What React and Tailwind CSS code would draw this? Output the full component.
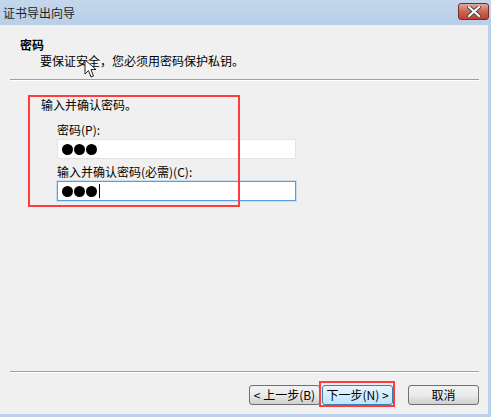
const font = { fontFamily: '"Noto Sans CJK SC", "Liberation Sans", sans-serif' };

function Dots({ caret }) {
  return (
    <div className="flex items-center gap-[1px] pl-[4px] h-full">
      <span className="w-[11px] h-[11px] rounded-full bg-black" />
      <span className="w-[11px] h-[11px] rounded-full bg-black" />
      <span className="w-[11px] h-[11px] rounded-full bg-black" />
      {caret && <span className="ml-[1px] w-[1px] h-[14px] bg-black" />}
    </div>
  );
}

function WinButton({ children, active }) {
  return (
    <div
      className={
        "w-[71px] h-[20px] rounded-[3px] border flex items-center justify-center text-[12px] text-black " +
        (active
          ? "border-[#3c7fb1] bg-gradient-to-b from-[#eaf6fd] to-[#bee6fd]"
          : "border-[#707070] bg-gradient-to-b from-[#f2f2f2] via-[#ebebeb] to-[#cfcfcf]")
      }
    >
      {children}
    </div>
  );
}

export default function App() {
  return (
    <div
      className="w-[491px] h-[417px] bg-[#b9d1ea] flex flex-col overflow-hidden relative"
      style={font}
    >
      {/* title bar */}
      <div className="h-[25px] flex items-center justify-between pl-[3px] pr-[2px] bg-gradient-to-b from-[#c3d7ec] to-[#b8cfe8]">
        <span className="text-[12px] text-[#1e1e1e]">证书导出向导</span>
        <div className="w-[31px] h-[17px] mb-[2px] rounded-[3px] border border-[#6e2e28] bg-gradient-to-b from-[#e5a79c] via-[#d06452] to-[#c23d2a] flex items-center justify-center">
          <svg width="14" height="11" viewBox="0 0 14 11">
            <path
              d="M2 1 L12 10 M12 1 L2 10"
              stroke="#4a4a4a"
              strokeWidth="4"
              strokeLinecap="square"
            />
            <path
              d="M2 1 L12 10 M12 1 L2 10"
              stroke="#ffffff"
              strokeWidth="2"
              strokeLinecap="square"
            />
          </svg>
        </div>
      </div>

      {/* body */}
      <div className="flex-1 mr-[3px] mb-[3px] bg-[#f0f0f0] flex flex-col relative">
        <div className="pt-[12px] pl-[20px]">
          <div className="text-[12px] leading-[16px] font-bold text-black">密码</div>
          <div className="text-[12px] leading-[16px] pl-[20px] text-black">
            要保证安全，您必须用密码保护私钥。
          </div>
        </div>
        <div className="mt-[10px] ml-[10px] mr-[9px] h-[2px] border-t border-[#a0a0a0] border-b border-b-white" />

        <div className="pl-[41px] pt-[16px] text-[12px] leading-[16px] text-black">
          <div>输入并确认密码。</div>
          <div className="pl-[16px] pt-[9px]">
            <div>密码(P):</div>
            <div className="mt-[1px] w-[239px] h-[20px] bg-white border border-[#e3e3e3]">
              <Dots />
            </div>
            <div className="mt-[5px]">输入并确认密码(必需)(C):</div>
            <div className="mt-[1px] w-[239px] h-[20px] bg-white border border-[#569de5] shadow-[0_0_0_1px_#c7ddf2]">
              <Dots caret />
            </div>
          </div>
        </div>

        <div className="flex-1" />

        <div className="ml-[10px] mr-[9px] h-[2px] border-t border-[#a0a0a0] border-b border-b-white" />
        <div className="flex items-center pl-[249px] pt-[11px] pb-[9px] h-[41px]">
          <WinButton>&lt; 上一步(B)</WinButton>
          <div className="ml-[2px]">
            <WinButton active>下一步(N) &gt;</WinButton>
          </div>
          <div className="ml-[15px]">
            <WinButton>取消</WinButton>
          </div>
        </div>

        {/* red annotation boxes */}
        <div className="absolute left-[28px] top-[70px] w-[212px] h-[112px] border-2 border-[#ff3b3b] pointer-events-none" />
        <div className="absolute left-[319px] top-[356px] w-[76px] h-[26px] border-2 border-[#ff3b3b] pointer-events-none" />

        {/* mouse cursor */}
        <svg
          className="absolute left-[84px] top-[34px]"
          width="14"
          height="20"
          viewBox="0 0 14 20"
        >
          <path
            d="M1 1 L1 15 L4.5 11.5 L7 18 L9.5 17 L7 10.5 L12 10.5 Z"
            fill="#ffffff"
            stroke="#222"
            strokeWidth="1"
            strokeLinejoin="round"
          />
        </svg>
      </div>
    </div>
  );
}
